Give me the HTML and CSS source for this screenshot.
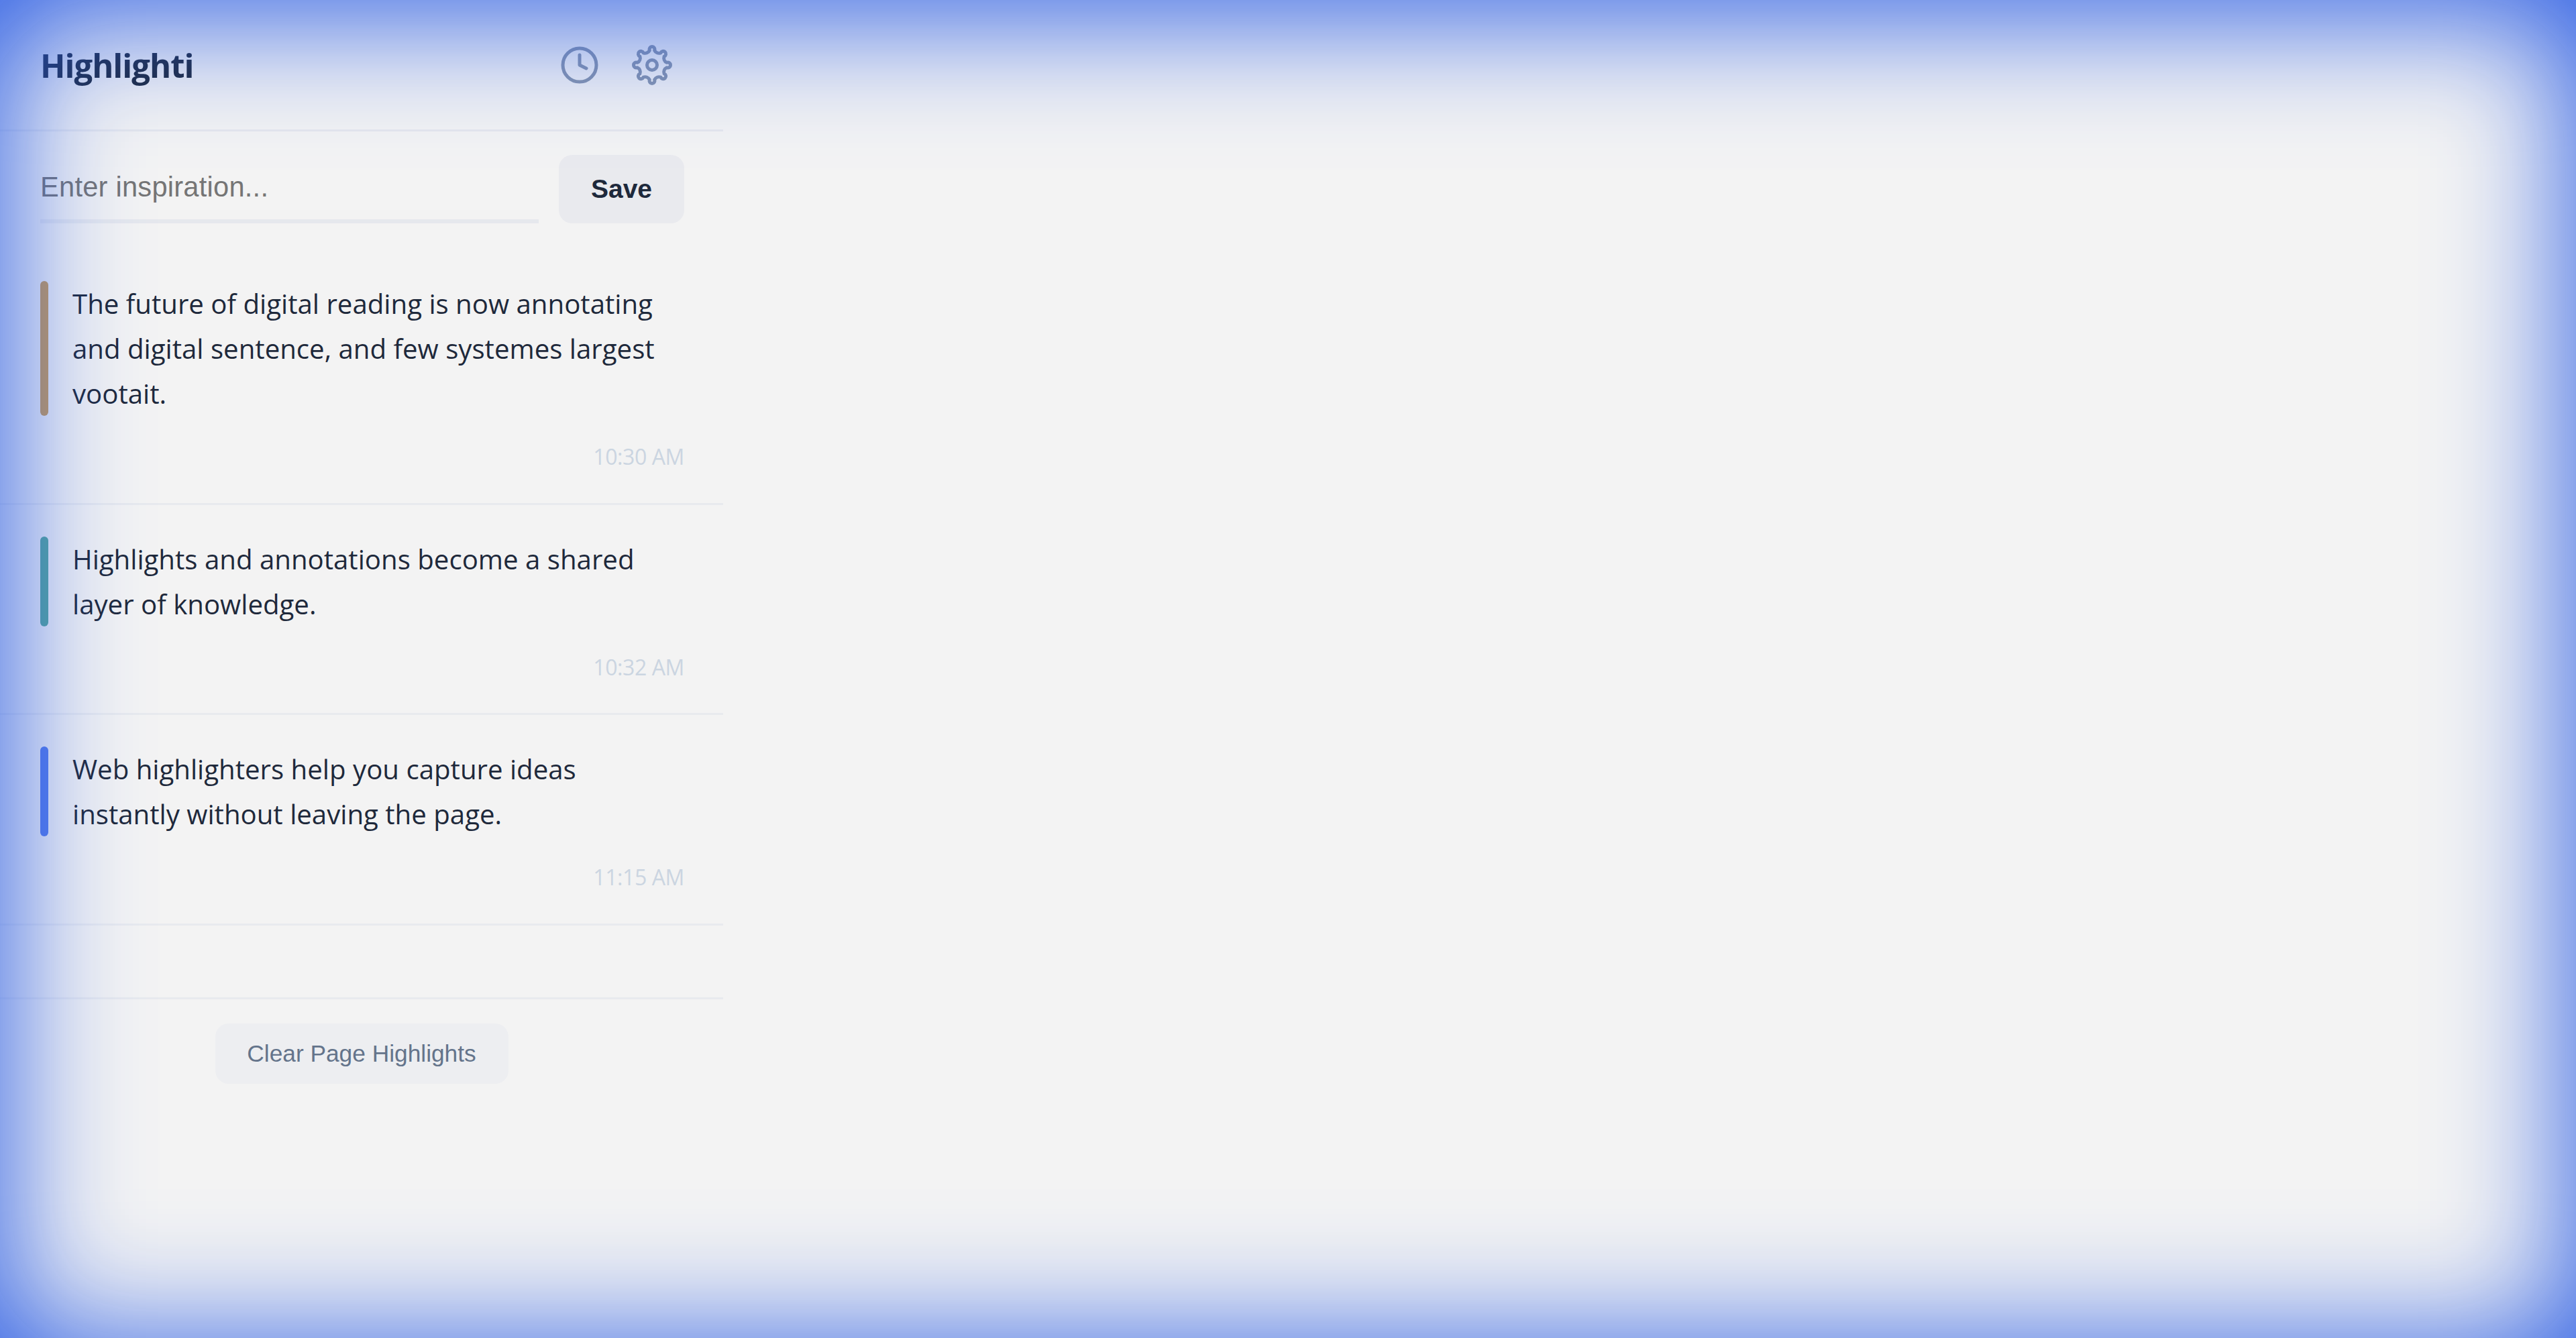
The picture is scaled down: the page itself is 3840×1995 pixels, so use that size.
FILE: index.html
```html
<!DOCTYPE html>
<html lang="en">
<head>
<meta charset="utf-8">
<title>Highlighti</title>
<link rel="stylesheet" href="styles.css">
</head>
<body>
<aside class="sidebar">
  <header class="header">
    <h1 class="title">Highlighti</h1>
    <div class="tools">
      <svg class="icon" viewBox="0 0 24 24" aria-label="History"><circle cx="12" cy="12" r="10"/><path d="M12 6v6l4 2"/></svg>
      <svg class="icon" viewBox="0 0 24 24" aria-label="Settings"><path d="M10.531 3.222A1.6 1.6 0 1 1 13.469 3.222A3 3 0 0 0 17.168 4.755A1.6 1.6 0 1 1 19.245 6.832A3 3 0 0 0 20.778 10.531A1.6 1.6 0 1 1 20.778 13.469A3 3 0 0 0 19.245 17.168A1.6 1.6 0 1 1 17.168 19.245A3 3 0 0 0 13.469 20.778A1.6 1.6 0 1 1 10.531 20.778A3 3 0 0 0 6.832 19.245A1.6 1.6 0 1 1 4.755 17.168A3 3 0 0 0 3.222 13.469A1.6 1.6 0 1 1 3.222 10.531A3 3 0 0 0 4.755 6.832A1.6 1.6 0 1 1 6.832 4.755A3 3 0 0 0 10.531 3.222Z"/><circle cx="12" cy="12" r="3"/></svg>
    </div>
  </header>
  <form class="entry">
    <input class="entry-input" type="text" placeholder="Enter inspiration...">
    <button class="save" type="button">Save</button>
  </form>
  <ul class="list">
    <li class="item">
      <div class="quote">
        <span class="mark mark-brown"></span>
        <p class="text">The future of digital reading is now annotating and digital sentence, and few systemes largest vootait.</p>
      </div>
      <time class="stamp">10:30 AM</time>
    </li>
    <li class="item">
      <div class="quote">
        <span class="mark mark-teal"></span>
        <p class="text">Highlights and annotations become a shared layer of knowledge.</p>
      </div>
      <time class="stamp">10:32 AM</time>
    </li>
    <li class="item">
      <div class="quote">
        <span class="mark mark-blue"></span>
        <p class="text">Web highlighters help you capture ideas instantly without leaving the page.</p>
      </div>
      <time class="stamp">11:15 AM</time>
    </li>
  </ul>
  <footer class="footer">
    <button class="clear" type="button">Clear Page Highlights</button>
  </footer>
</aside>
<div class="glow"></div>
</body>
</html>
```
FILE: styles.css
```css
* { box-sizing: border-box; }
html, body { height: 100%; }
body {
  margin: 0;
  background: #f3f3f3;
  color: #1e293b;
  font-family: "Open Sans", "Noto Sans", sans-serif;
  overflow: hidden;
}
.sidebar { width: 1078px; }
.header {
  height: 196px;
  padding: 0 60px 0 60px;
  display: flex;
  align-items: center;
  justify-content: space-between;
  border-bottom: 3px solid #e6e8ed;
}
.title {
  margin: 0;
  font-size: 49px;
  font-weight: 700;
  color: #1e293b;
  letter-spacing: -1px;
}
.tools { display: flex; gap: 48px; padding-right: 16px; }
.icon {
  width: 60px;
  height: 60px;
  fill: none;
  stroke: #8795ad;
  stroke-width: 2;
  stroke-linecap: round;
  stroke-linejoin: round;
  overflow: visible;
}
.entry {
  display: flex;
  gap: 30px;
  padding: 35px 58px 39px 60px;
  align-items: stretch;
}
.entry-input {
  flex: 1;
  min-width: 0;
  height: 102px;
  border: 0;
  border-bottom: 6px solid #e6e8ed;
  background: transparent;
  padding: 0;
  font-family: "Liberation Sans", sans-serif;
  font-size: 41.6px;
  letter-spacing: .25px;
  color: #1e293b;
  outline: none;
}
.entry-input::placeholder { color: #757575; opacity: 1; }
.save {
  width: 187px;
  height: 102px;
  border: 0;
  border-radius: 20px;
  background: #e9eaee;
  font-family: "Liberation Sans", sans-serif;
  font-weight: 700;
  font-size: 39px;
  color: #1e293b;
  padding: 0;
}
.list { list-style: none; margin: 0; padding: 0; height: 1118px; border-bottom: 3px solid #e8eaee; }
.item {
  padding: 47px 58px 48.5px 60px;
  border-bottom: 3px solid #e8eaee;
}
.quote { display: flex; gap: 36px; }
.mark { flex: none; width: 12px; border-radius: 6px; }
.mark-brown { background: #cc9d54; }
.mark-teal { background: #57a89a; }
.mark-blue { background: #577de9; }
.text {
  margin: 0;
  font-size: 40.2px;
  line-height: 67px;
  font-weight: 400;
  color: #1e293b;
}
.stamp {
  display: block;
  margin-top: 41px;
  text-align: right;
  font-size: 32px;
  line-height: 40px;
  letter-spacing: -.4px;
  color: #cbd5e1;
}
.footer { display: flex; justify-content: center; padding-top: 36px; }
.clear {
  width: 437px;
  height: 90px;
  border: 0;
  border-radius: 20px;
  background: #edeef1;
  font-family: "Liberation Sans", sans-serif;
  font-size: 35.3px;
  color: #64748b;
  padding: 0;
}
.glow {
  position: fixed;
  inset: 0;
  pointer-events: none;
  box-shadow: inset 0 14px 190px 8px #2a5ce4;
}
```
